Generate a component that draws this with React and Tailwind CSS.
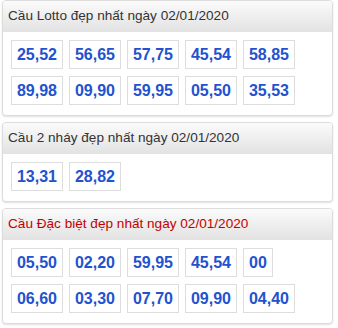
import React from 'react';

const panels = [
  {
    title: 'Cầu Lotto đẹp nhất ngày 02/01/2020',
    red: false,
    nums: ['25,52', '56,65', '57,75', '45,54', '58,85', '89,98', '09,90', '59,95', '05,50', '35,53'],
  },
  {
    title: 'Cầu 2 nháy đẹp nhất ngày 02/01/2020',
    red: false,
    nums: ['13,31', '28,82'],
  },
  {
    title: 'Cầu Đặc biệt đẹp nhất ngày 02/01/2020',
    red: true,
    nums: ['05,50', '02,20', '59,95', '45,54', '00', '06,60', '03,30', '07,70', '09,90', '04,40'],
  },
];

const Panel = ({ title, red, nums }) => (
  <div className="mb-[6px] border border-[#dcdcdc] rounded-[4px] bg-white shadow-[0_1px_2px_rgba(0,0,0,0.12)] overflow-hidden">
    <div
      className={`h-[31px] flex items-center px-[5px] text-[13.6px] bg-gradient-to-b from-[#fbfbfb] to-[#e2e2e2] ${
        red ? 'text-[#c40000]' : 'text-[#333333]'
      }`}
    >
      {title}
    </div>
    <div className="flex flex-wrap gap-x-[6px] gap-y-[7px] px-[8px] pt-[8px] pb-[10px]">
      {nums.map((n, i) => (
        <span
          key={i}
          className="w-[52px] h-[29px] border border-[#dddddd] text-[16px] font-bold leading-[27px] text-center text-[#2352cf] data-[short=true]:w-[30px]"
          data-short={n.length < 3 ? 'true' : 'false'}
        >
          {n}
        </span>
      ))}
    </div>
  </div>
);

export default function App() {
  return (
    <div className="w-[331px] ml-[2px] bg-white" style={{ fontFamily: '"Liberation Sans", Arial, sans-serif' }}>
      {panels.map((p, i) => (
        <Panel key={i} {...p} />
      ))}
    </div>
  );
}
